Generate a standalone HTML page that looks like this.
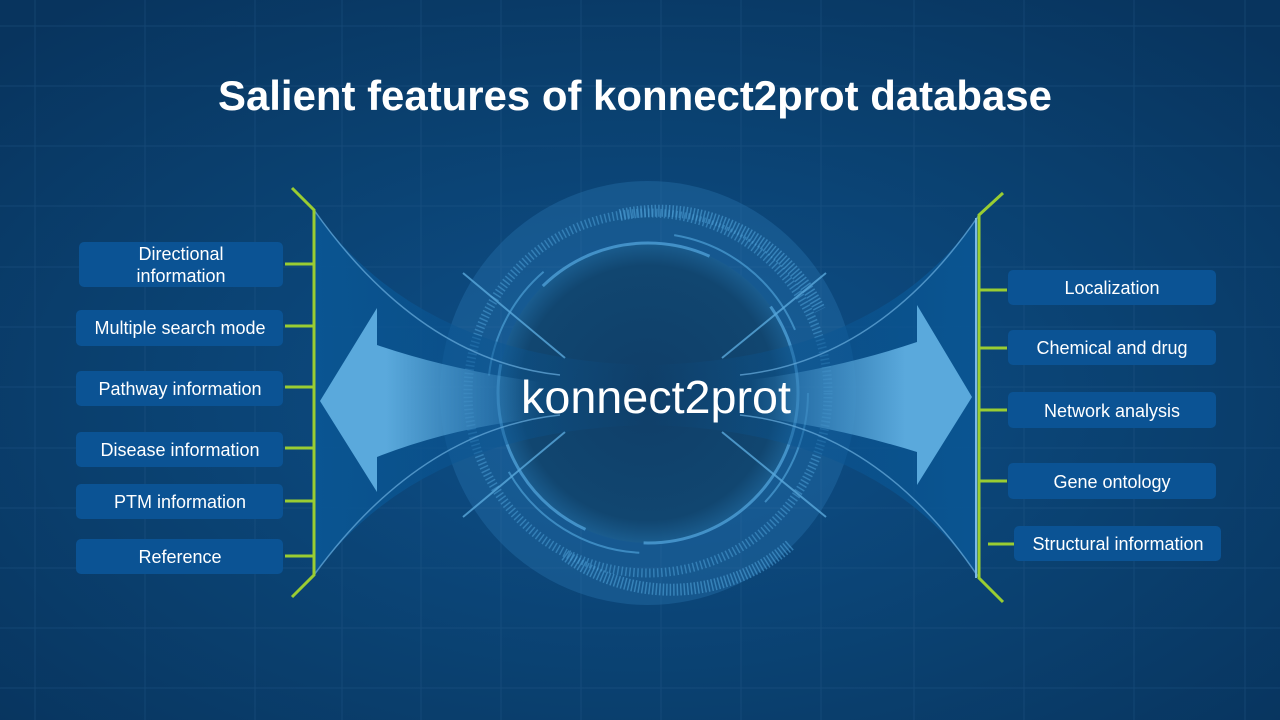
<!DOCTYPE html>
<html><head><meta charset="utf-8"><style>
html,body{margin:0;padding:0;width:1280px;height:720px;overflow:hidden;background:#0a3a66}
svg{display:block}
text{font-family:"Liberation Sans",Arial,sans-serif}
</style></head><body>
<svg width="1280" height="720" viewBox="0 0 1280 720" xmlns="http://www.w3.org/2000/svg">
<defs>
<radialGradient id="bg" cx="50%" cy="55%" r="70%">
<stop offset="0" stop-color="#0e508a"/><stop offset="0.6" stop-color="#0a406f"/><stop offset="1" stop-color="#08345e"/>
</radialGradient>
<radialGradient id="core" cx="50%" cy="50%" r="50%">
<stop offset="0" stop-color="#0f3e68"/><stop offset="0.85" stop-color="#114670"/><stop offset="1" stop-color="#1a5c8e"/>
</radialGradient>
<linearGradient id="la" x1="0" x2="1"><stop offset="0" stop-color="#5aa9dc"/><stop offset="0.3" stop-color="#5aa9dc"/><stop offset="1" stop-color="#5aa9dc" stop-opacity="0"/></linearGradient>
<linearGradient id="ra" x1="1" x2="0"><stop offset="0" stop-color="#5aa9dc"/><stop offset="0.3" stop-color="#5aa9dc"/><stop offset="1" stop-color="#5aa9dc" stop-opacity="0"/></linearGradient>
<linearGradient id="lf" x1="0" x2="1"><stop offset="0" stop-color="#0a5592"/><stop offset="1" stop-color="#0a5592" stop-opacity="0"/></linearGradient>
<linearGradient id="rf" x1="1" x2="0"><stop offset="0" stop-color="#0a5592"/><stop offset="1" stop-color="#0a5592" stop-opacity="0"/></linearGradient>
</defs>
<rect width="1280" height="720" fill="url(#bg)"/>
<g stroke="#2a5f90" stroke-width="1" opacity="0.35">
<line x1="35" y1="0" x2="35" y2="720"/><line x1="145" y1="0" x2="145" y2="720"/><line x1="255" y1="0" x2="255" y2="720"/>
<line x1="342" y1="0" x2="342" y2="720"/><line x1="421" y1="0" x2="421" y2="720"/><line x1="501" y1="0" x2="501" y2="720"/>
<line x1="581" y1="0" x2="581" y2="720"/><line x1="661" y1="0" x2="661" y2="720"/><line x1="741" y1="0" x2="741" y2="720"/>
<line x1="821" y1="0" x2="821" y2="720"/><line x1="914" y1="0" x2="914" y2="720"/><line x1="1024" y1="0" x2="1024" y2="720"/>
<line x1="1134" y1="0" x2="1134" y2="720"/><line x1="1245" y1="0" x2="1245" y2="720"/>
<line x1="0" y1="26" x2="1280" y2="26"/><line x1="0" y1="86" x2="1280" y2="86"/><line x1="0" y1="146" x2="1280" y2="146"/>
<line x1="0" y1="206" x2="1280" y2="206"/><line x1="0" y1="267" x2="1280" y2="267"/><line x1="0" y1="327" x2="1280" y2="327"/>
<line x1="0" y1="387" x2="1280" y2="387"/><line x1="0" y1="448" x2="1280" y2="448"/><line x1="0" y1="508" x2="1280" y2="508"/>
<line x1="0" y1="568" x2="1280" y2="568"/><line x1="0" y1="628" x2="1280" y2="628"/><line x1="0" y1="688" x2="1280" y2="688"/>
</g>
<text x="635" y="110" fill="#fff" font-size="42" font-weight="bold" text-anchor="middle" textLength="834" lengthAdjust="spacingAndGlyphs">Salient features of konnect2prot database</text>

<!-- center disk -->
<ellipse cx="648" cy="393" rx="208" ry="212" fill="#2a78b4" opacity="0.35"/>
<circle cx="648" cy="393" r="150" fill="url(#core)"/>
<g fill="none" stroke="#4d9fd6">
<circle cx="648" cy="393" r="150" stroke-width="3" stroke-dasharray="240 60 200 90 180 80" opacity="0.8"/>
<circle cx="648" cy="393" r="160" stroke-width="2" stroke-dasharray="120 140 160 100" opacity="0.7"/>
<circle cx="648" cy="393" r="180" stroke-width="9" stroke-dasharray="1.5 2.5" opacity="0.55"/>
<path d="M620 215 A180 180 0 0 1 820 310" stroke-width="12" stroke-dasharray="1.5 2" opacity="0.6"/>
<path d="M565 555 A180 180 0 0 0 790 545" stroke-width="12" stroke-dasharray="1.5 2" opacity="0.6"/>
</g>
<g stroke="#5aa9dc" stroke-width="2" opacity="0.8">
<line x1="463" y1="273" x2="565" y2="358"/><line x1="826" y1="273" x2="722" y2="358"/>
<line x1="463" y1="517" x2="565" y2="432"/><line x1="826" y1="517" x2="722" y2="432"/>
</g>

<!-- funnels -->
<path d="M314 210 Q420 360 648 365 L648 425 Q420 430 314 575 Z" fill="url(#lf)"/>
<path d="M979 215 Q880 360 648 365 L648 425 Q880 430 979 578 Z" fill="url(#rf)"/>
<path d="M314 210 Q420 360 560 375" stroke="#6aaede" stroke-width="1.5" fill="none" opacity="0.7"/>
<path d="M314 575 Q420 430 560 415" stroke="#6aaede" stroke-width="1.5" fill="none" opacity="0.7"/>
<path d="M979 215 Q880 360 740 375" stroke="#6aaede" stroke-width="1.5" fill="none" opacity="0.7"/>
<path d="M979 578 Q880 430 740 415" stroke="#6aaede" stroke-width="1.5" fill="none" opacity="0.7"/>
<path d="M976 218 L976 578" stroke="#7ab8e8" stroke-width="2"/>

<!-- arrows -->
<path d="M320 401 L377 308 L377 345 Q450 370 540 382 L540 418 Q450 428 377 457 L377 492 Z" fill="url(#la)"/>
<path d="M972 397 L917 305 L917 342 Q840 368 750 380 L750 416 Q840 428 917 452 L917 485 Z" fill="url(#ra)"/>

<text x="656" y="413" fill="#fff" font-size="46" text-anchor="middle" textLength="270" lengthAdjust="spacingAndGlyphs">konnect2prot</text>

<!-- green brackets -->
<g stroke="#9acd32" stroke-width="3" fill="none">
<path d="M292 188 L314 210 L314 575 L292 597"/>
<line x1="285" y1="264" x2="314" y2="264"/><line x1="285" y1="326" x2="314" y2="326"/>
<line x1="285" y1="387" x2="314" y2="387"/><line x1="285" y1="448" x2="314" y2="448"/>
<line x1="285" y1="501" x2="314" y2="501"/><line x1="285" y1="556" x2="314" y2="556"/>
<path d="M1003 193 L979 215 L979 578 L1003 602"/>
<line x1="979" y1="290" x2="1007" y2="290"/><line x1="979" y1="348" x2="1007" y2="348"/>
<line x1="979" y1="410" x2="1007" y2="410"/><line x1="979" y1="481" x2="1007" y2="481"/>
<line x1="988" y1="544" x2="1014" y2="544"/>
</g>

<!-- boxes -->
<g fill="#0b5394">
<rect x="79" y="242" width="204" height="45" rx="5"/>
<rect x="76" y="310" width="207" height="36" rx="5"/>
<rect x="76" y="371" width="207" height="35" rx="5"/>
<rect x="76" y="432" width="207" height="35" rx="5"/>
<rect x="76" y="484" width="207" height="35" rx="5"/>
<rect x="76" y="539" width="207" height="35" rx="5"/>
<rect x="1008" y="270" width="208" height="35" rx="5"/>
<rect x="1008" y="330" width="208" height="35" rx="5"/>
<rect x="1008" y="392" width="208" height="36" rx="5"/>
<rect x="1008" y="463" width="208" height="36" rx="5"/>
<rect x="1014" y="526" width="207" height="35" rx="5"/>
</g>
<g fill="#fff" font-size="18" text-anchor="middle">
<text x="181" y="260">Directional</text><text x="181" y="282">information</text>
<text x="180" y="334">Multiple search mode</text>
<text x="180" y="395">Pathway  information</text>
<text x="180" y="456">Disease information</text>
<text x="180" y="508">PTM information</text>
<text x="180" y="563">Reference</text>
<text x="1112" y="294">Localization</text>
<text x="1112" y="354">Chemical and drug</text>
<text x="1112" y="417">Network analysis</text>
<text x="1112" y="488">Gene ontology</text>
<text x="1118" y="550">Structural information</text>
</g>
</svg>
</body></html>
